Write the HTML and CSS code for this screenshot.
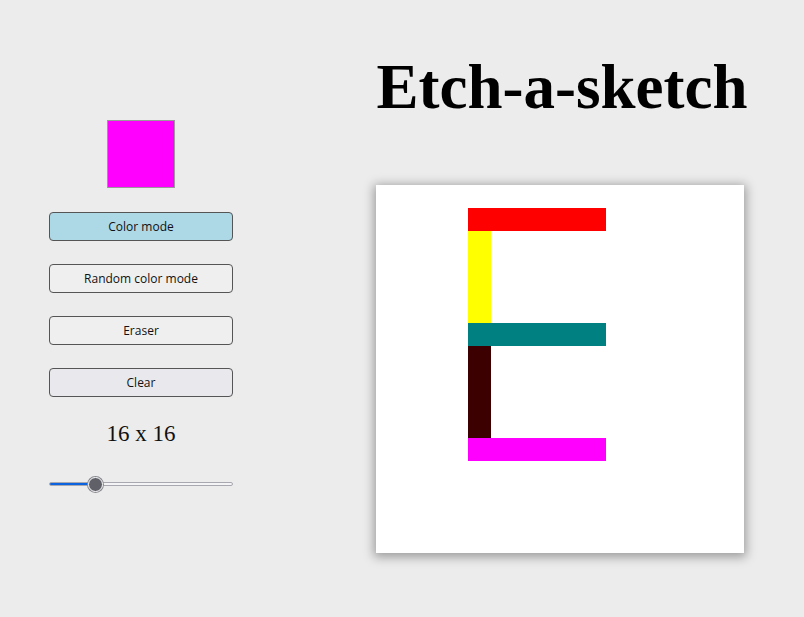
FILE: index.html
```html
<!DOCTYPE html>
<html>
<head>
<meta charset="utf-8">
<link rel="stylesheet" href="styles.css">
</head>
<body>
<div class="page">
  <aside class="controls">
    <div class="swatch"></div>
    <button class="btn active">Color mode</button>
    <button class="btn">Random color mode</button>
    <button class="btn">Eraser</button>
    <button class="btn clear">Clear</button>
    <div class="size">16 x 16</div>
    <input class="slider" type="range" min="2" max="64" value="16">
  </aside>
  <main class="main">
    <h1 class="title">Etch-a-sketch</h1>
    <div class="board">
      <div class="cell red" style="grid-row:2;grid-column:5 / span 6"></div>
      <div class="cell yellow" style="grid-row:3 / span 4;grid-column:5"></div>
      <div class="cell teal" style="grid-row:7;grid-column:5 / span 6"></div>
      <div class="cell maroon" style="grid-row:8 / span 4;grid-column:5"></div>
      <div class="cell magenta" style="grid-row:12;grid-column:5 / span 6"></div>
    </div>
  </main>
</div>
</body>
</html>
```
FILE: styles.css
```css
html, body {
  margin: 0;
  padding: 0;
  background: #ececec;
  height: 100%;
}
.page {
  display: flex;
  padding-left: 49px;
}
.controls {
  width: 184px;
  display: flex;
  flex-direction: column;
  align-items: center;
  padding-top: 120px;
}
.swatch {
  width: 66px;
  height: 66px;
  background: #ff00ff;
  border: 1px solid #9a9a9a;
  margin-bottom: 24px;
}
.btn {
  width: 184px;
  height: 29px;
  margin: 0 0 23px 0;
  padding: 0;
  border: 1px solid #555;
  border-radius: 4px;
  background: #efefef;
  font-family: "Open Sans", "Liberation Sans", sans-serif;
  font-size: 12px;
  color: #111;
}
.btn.active {
  background: #add8e6;
}
.btn.clear {
  background: #e9e9ed;
}
.size {
  font-family: "Liberation Serif", serif;
  font-size: 23px;
  margin-top: 0;
  line-height: 28px;
  color: #111;
}
.slider {
  -webkit-appearance: none;
  appearance: none;
  width: 184px;
  height: 4px;
  margin: 34px 0 0 0;
  border-radius: 3px;
  border: 1px solid #a8a8b0;
  background: linear-gradient(to right, #0b63e0 0, #0b63e0 42px, #f4f4f6 42px);
  box-sizing: border-box;
}
.slider::-webkit-slider-thumb {
  -webkit-appearance: none;
  width: 15px;
  height: 15px;
  border-radius: 50%;
  background: #5f6068;
  border: 1.5px solid #fff;
  box-shadow: 0 0 0 1px #8a8a92;
}
.main {
  margin-left: 143px;
  display: flex;
  flex-direction: column;
  align-items: center;
  width: 368px;
}
.title {
  font-family: "Liberation Serif", serif;
  font-weight: bold;
  font-size: 63px;
  margin: 48px 0 0 0;
  line-height: 78px;
  white-space: nowrap;
  color: #000;
  padding-left: 4px;
}
.board {
  margin-top: 59px;
  width: 368px;
  height: 368px;
  background: #fff;
  display: grid;
  grid-template-columns: repeat(16, 23px);
  grid-template-rows: repeat(16, 23px);
  box-shadow: 0 2px 10px 2px rgba(0, 0, 0, 0.35);
}
.red { background: #ff0000; }
.yellow { background: #ffff00; }
.teal { background: #008080; }
.maroon { background: #3d0000; }
.magenta { background: #ff00ff; }
```
